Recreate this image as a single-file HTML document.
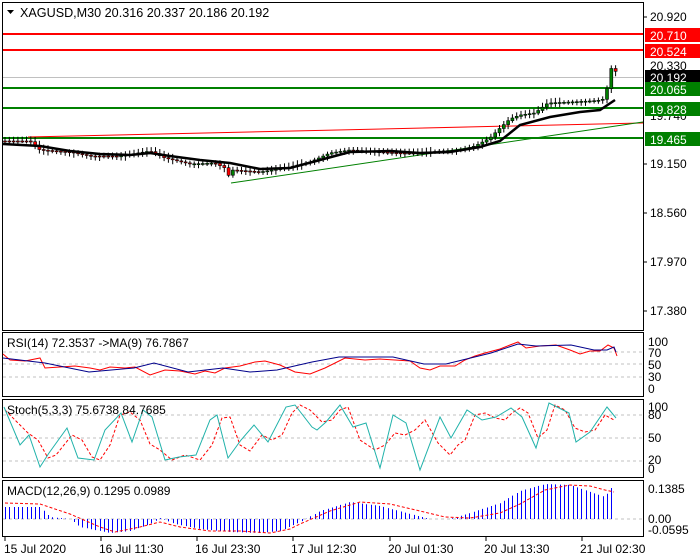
<!DOCTYPE html>
<html><head><meta charset="utf-8"><style>
html,body{margin:0;padding:0;background:#fff}
svg{display:block}
text{font-family:"Liberation Sans","DejaVu Sans",sans-serif;font-size:12px;fill:#000}
</style></head><body>
<svg id="s" width="700" height="560" xmlns="http://www.w3.org/2000/svg">
<rect width="700" height="560" fill="#fff"/>
<rect x="2.5" y="2.5" width="641" height="328" fill="none" stroke="#000"/>
<rect x="2.5" y="332.5" width="641" height="64" fill="none" stroke="#000"/>
<rect x="2.5" y="399.5" width="641" height="78" fill="none" stroke="#000"/>
<rect x="2.5" y="480.5" width="641" height="56" fill="none" stroke="#000"/>
<path d="M7 10 L14 10 L10.5 14 Z" fill="#000"/>
<text x="20" y="17" style="font-size:12.6px">XAGUSD,M30  20.316 20.337 20.186 20.192</text>
<line x1="3" y1="34" x2="643" y2="34" stroke="#f00" stroke-width="2"/>
<line x1="3" y1="50" x2="643" y2="50" stroke="#f00" stroke-width="2"/>
<line x1="3" y1="77.5" x2="643" y2="77.5" stroke="#c0c0c0"/>
<line x1="3" y1="88" x2="643" y2="88" stroke="#008000" stroke-width="2"/>
<line x1="3" y1="108" x2="643" y2="108" stroke="#008000" stroke-width="2"/>
<line x1="3" y1="138" x2="643" y2="138" stroke="#008000" stroke-width="2"/>
<line x1="28" y1="137" x2="643" y2="123" stroke="#f00"/>
<line x1="231" y1="183" x2="643" y2="122" stroke="#008000"/>
<g id="candles"></g>
<polyline fill="none" stroke="#000" stroke-width="2.5" points="3,144 40,146 70,151 100,154 130,155 150,153 170,156 200,160 230,163 260,169 290,168 320,160 350,152 390,151 420,153 450,152 480,147 500,141 520,125 550,117 580,112 600,110 615,100"/>
<g>
<line x1="643" y1="17" x2="647" y2="17" stroke="#000"/><text x="650" y="21">20.920</text>
<text x="650" y="70">20.330</text>
<text x="650" y="120">19.740</text>
<line x1="643" y1="164" x2="647" y2="164" stroke="#000"/><text x="650" y="168">19.150</text>
<line x1="643" y1="213" x2="647" y2="213" stroke="#000"/><text x="650" y="217">18.560</text>
<line x1="643" y1="262" x2="647" y2="262" stroke="#000"/><text x="650" y="266">17.970</text>
<line x1="643" y1="311" x2="647" y2="311" stroke="#000"/><text x="650" y="315">17.380</text>
<rect x="645" y="28" width="55" height="14" fill="#f00"/><text x="650" y="40" style="fill:#fff">20.710</text>
<rect x="645" y="44" width="55" height="14" fill="#f00"/><text x="650" y="56" style="fill:#fff">20.524</text>
<rect x="645" y="70" width="55" height="14" fill="#000"/><text x="650" y="82" style="fill:#fff">20.192</text>
<rect x="645" y="82" width="55" height="14" fill="#008000"/><text x="650" y="94" style="fill:#fff">20.065</text>
<rect x="645" y="102" width="55" height="14" fill="#008000"/><text x="650" y="114" style="fill:#fff">19.828</text>
<rect x="645" y="132" width="55" height="14" fill="#008000"/><text x="650" y="144" style="fill:#fff">19.465</text>
</g>
<g stroke="#c0c0c0" stroke-dasharray="3,3">
<line x1="3" y1="352" x2="643" y2="352"/><line x1="3" y1="364" x2="643" y2="364"/><line x1="3" y1="377" x2="643" y2="377"/>
<line x1="3" y1="415" x2="643" y2="415"/><line x1="3" y1="438" x2="643" y2="438"/><line x1="3" y1="461" x2="643" y2="461"/>
<line x1="3" y1="519" x2="643" y2="519"/>
</g>
<polyline fill="none" stroke="#f00" points="3,354 10,360 25,361 40,358 45,368 60,367 75,366 90,368 100,370 110,367 125,368 135,367 150,375 165,370 180,371 195,374 205,371 215,373 225,368 240,366 255,362 265,361 280,365 295,372 310,374 325,368 345,358 365,360 380,359 395,360 410,361 420,368 430,370 440,366 455,366 465,360 475,356 485,353 500,349 510,345 518,342 526,348 540,346 556,345 570,350 580,354 590,351 600,351 608,345 614,348 617,356"/>
<polyline fill="none" stroke="#00008b" points="3,358 45,363 89,372 134,368 154,363 188,372 223,368 250,372 277,370 312,362 339,357 393,357 424,364 446,364 491,353 518,344 536,346 571,345 594,350 607,350 614,347 616,352"/>
<text x="7" y="347">RSI(14) 72.3537  -&gt;MA(9) 76.7867</text>
<text x="648" y="346">100</text><text x="648" y="357">70</text><text x="648" y="369">50</text><text x="648" y="381">30</text><text x="648" y="393">0</text>
<polyline fill="none" stroke="#f00" stroke-dasharray="3,2" points="5,410 15,420 28,433 38,440 48,458 56,455 72,435 82,440 92,457 100,460 110,445 120,415 130,412 140,420 150,444 160,450 172,460 185,455 200,460 212,445 222,418 230,417 240,445 250,451 262,435 272,440 282,435 292,413 300,405 310,410 322,422 332,420 340,410 348,407 360,440 375,450 385,445 395,433 405,435 415,430 425,420 438,443 450,455 458,445 465,440 475,415 485,413 495,418 505,420 512,413 520,408 528,413 538,438 547,430 555,405 565,410 575,428 585,432 595,430 605,415 614,420"/>
<polyline fill="none" stroke="#20b2aa" points="4,407 20,445 29,435 40,467 49,453 67,428 78,458 94,460 105,430 121,413 132,442 143,410 152,417 165,460 179,457 196,455 210,420 217,415 228,458 241,440 254,425 268,442 286,407 295,405 312,427 317,430 326,422 340,405 353,427 366,423 380,468 393,415 406,423 420,470 440,417 451,438 467,410 482,420 496,417 511,408 522,417 536,448 549,403 569,413 576,442 590,432 607,407 616,418"/>
<text x="7" y="414">Stoch(5,3,3) 75.6738 84.7685</text>
<text x="648" y="411">100</text><text x="648" y="419">80</text><text x="648" y="442">50</text><text x="648" y="464">20</text><text x="648" y="473">0</text>
<g id="macd"></g>
<polyline fill="none" stroke="#f00" stroke-dasharray="3,2" points="5,503 40,504 70,514 100,527 115,532 140,527 160,522 180,527 210,531 240,531 270,533 290,529 300,524 330,511 360,502 390,504 420,511 445,517 470,518 500,513 520,504 545,490 570,485 590,486 605,490 614,492"/>
<text x="7" y="495">MACD(12,26,9) 0.1295 0.0989</text>
<text x="648" y="493">0.1385</text><text x="648" y="523">0.00</text><text x="648" y="534">-0.0595</text>
<g stroke="#000">
<line x1="5" y1="537" x2="5" y2="541"/><line x1="101" y1="537" x2="101" y2="541"/><line x1="197" y1="537" x2="197" y2="541"/><line x1="293" y1="537" x2="293" y2="541"/><line x1="390" y1="537" x2="390" y2="541"/><line x1="486" y1="537" x2="486" y2="541"/><line x1="582" y1="537" x2="582" y2="541"/>
</g>
<text x="4" y="553">15 Jul 2020</text>
<text x="99" y="553">16 Jul 11:30</text>
<text x="195" y="553">16 Jul 23:30</text>
<text x="291" y="553">17 Jul 12:30</text>
<text x="388" y="553">20 Jul 01:30</text>
<text x="484" y="553">20 Jul 13:30</text>
<text x="580" y="553">21 Jul 02:30</text>
</svg>
<script>
(function(){
var NS="http://www.w3.org/2000/svg";
function interp(pts,x){for(var i=0;i<pts.length-1;i++){if(x>=pts[i][0]&&x<=pts[i+1][0]){var t=(x-pts[i][0])/(pts[i+1][0]-pts[i][0]);return pts[i][1]+t*(pts[i+1][1]-pts[i][1]);}}return pts[pts.length-1][1];}
var price=[[5,141],[30,141],[40,150],[70,152],[90,156],[120,156],[150,151],[165,158],[190,164],[215,163],[225,168],[230,178],[232,170],[260,172],[290,167],[310,162],[330,153],[350,150],[380,152],[400,153],[420,153],[440,151],[460,150],[475,146],[490,138],[500,128],[510,119],[520,115],[535,113],[548,103],[570,102],[590,101],[602,100],[605,97],[609,80],[612,65],[616,72]];
var g=document.getElementById("candles"),d="";
var prev=interp(price,5);
for(var x=5;x<=616;x+=4.3){var c=interp(price,x),o=prev;prev=c;var hi=Math.min(o,c)-2-((x*7)%3),lo=Math.max(o,c)+2+((x*5)%3);
d+="M"+x.toFixed(1)+" "+hi.toFixed(1)+"V"+lo.toFixed(1);
var r=document.createElementNS(NS,"rect");var top=Math.min(o,c),h=Math.max(1,Math.abs(o-c));
r.setAttribute("x",(x-1.5).toFixed(1));r.setAttribute("y",top.toFixed(1));r.setAttribute("width","3");r.setAttribute("height",h.toFixed(1));
r.setAttribute("fill",c<o?"#008000":"#f00");r.setAttribute("stroke","#000");r.setAttribute("stroke-width","0.6");g.appendChild(r);}
var p=document.createElementNS(NS,"path");p.setAttribute("d",d);p.setAttribute("stroke","#000");p.setAttribute("fill","none");g.insertBefore(p,g.firstChild);
var h=[[5,12],[40,12],[50,2],[70,0],[80,-8],[110,-14],[130,-12],[150,-5],[160,1],[175,-5],[200,-10],[230,-13],[260,-14],[280,-12],[300,-3],[320,8],[350,17],[380,13],[410,5],[430,0],[450,0],[470,6],[500,16],[520,28],[545,35],[570,34],[590,27],[605,22],[610,30],[614,33]];
var md="";for(var x=5;x<=614;x+=4.3){var v=interp(h,x);md+="M"+(Math.round(x)+0.5)+" 519V"+(519-v).toFixed(1);}
var mp=document.createElementNS(NS,"path");mp.setAttribute("d",md);mp.setAttribute("stroke","#0000ff");mp.setAttribute("stroke-width","1");mp.setAttribute("fill","none");
document.getElementById("macd").appendChild(mp);
})();
</script>
</body></html>
